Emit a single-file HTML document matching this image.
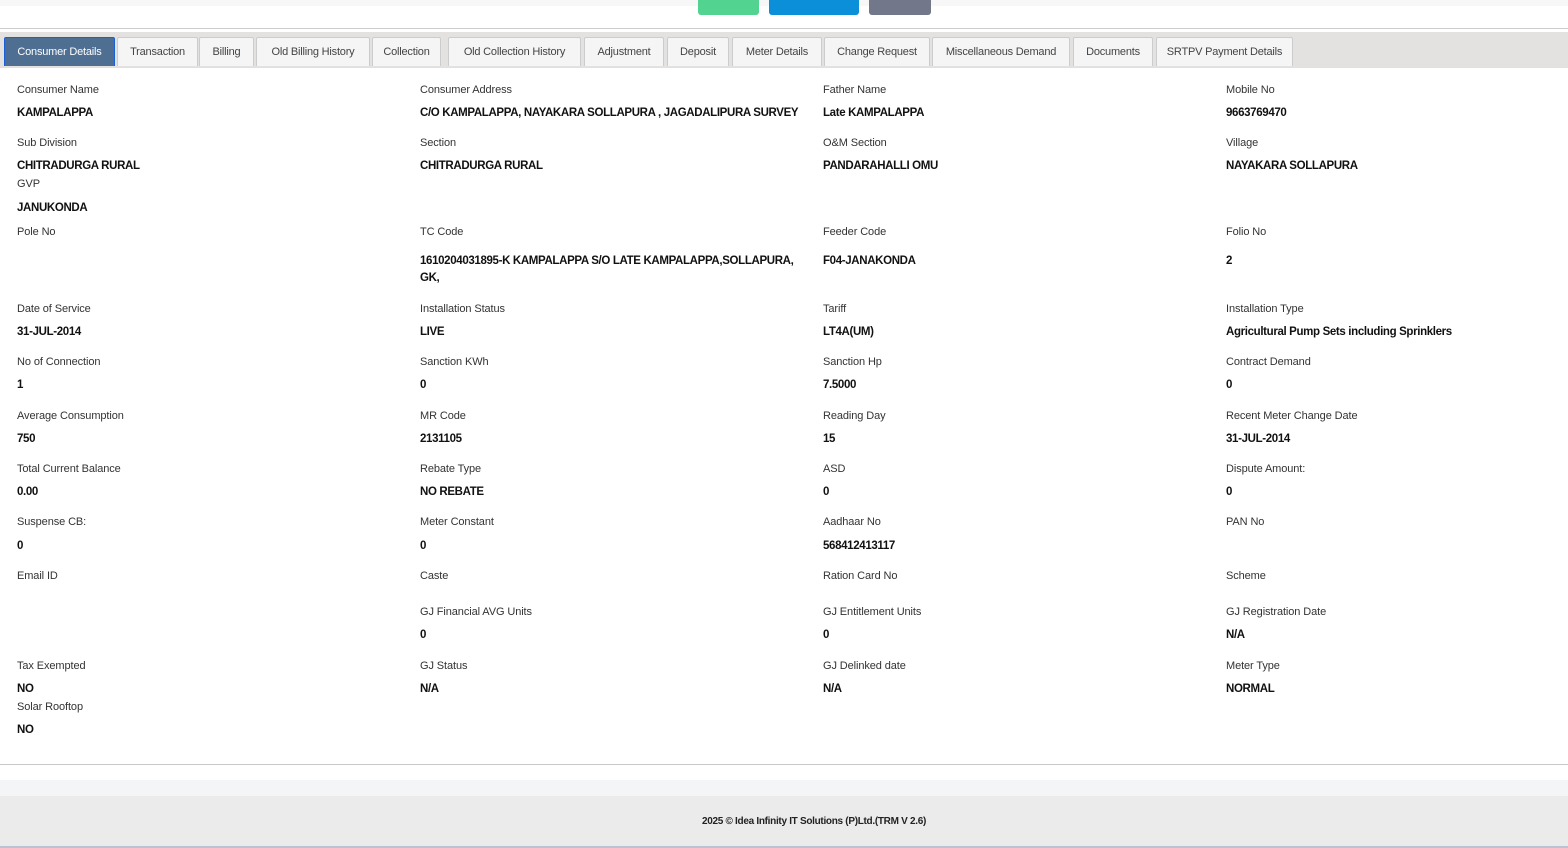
<!DOCTYPE html><html><head><style>
body{margin:0;width:1568px;height:848px;position:relative;background:#fff;font-family:"Liberation Sans",sans-serif;overflow:hidden;color:#222}
#w{position:absolute;left:0;top:1px;width:1568px;height:800px}
.a{position:absolute;white-space:nowrap;line-height:14px}
.l{font-size:11px;color:#333;letter-spacing:-0.1px}
.v{font-size:11.5px;font-weight:bold;color:#111;letter-spacing:-0.35px}
.tab{position:absolute;top:37px;height:29px;border:1px solid #ccc;border-bottom:none;background:#f5f5f5;font-size:11px;color:#444;text-align:center;line-height:29px;box-sizing:border-box;border-radius:2px 2px 0 0;letter-spacing:-0.2px}
</style></head><body>
<div style="position:absolute;left:0;top:0;width:1568px;height:6px;background:#f7f7f7"></div>
<div style="position:absolute;left:698px;top:0;width:61px;height:15px;background:#52d38f;border-radius:0 0 3px 3px"></div>
<div style="position:absolute;left:769px;top:0;width:90px;height:15px;background:#0a8fd8;border-radius:0 0 3px 3px"></div>
<div style="position:absolute;left:869px;top:0;width:62px;height:15px;background:#727789;border-radius:0 0 3px 3px"></div>
<div style="position:absolute;left:0;top:28px;width:1568px;height:1px;background:#ccc"></div>
<div style="position:absolute;left:0;top:32px;width:1568px;height:36px;background:#e4e2e0"></div>
<div class="tab" style="left:4px;width:111px;background:#4e6e92;color:#fff;border-color:#1a5fd8">Consumer Details</div>
<div class="tab" style="left:117px;width:81px">Transaction</div>
<div class="tab" style="left:199px;width:55px">Billing</div>
<div class="tab" style="left:256px;width:114px">Old Billing History</div>
<div class="tab" style="left:372px;width:69px">Collection</div>
<div class="tab" style="left:448px;width:133px">Old Collection History</div>
<div class="tab" style="left:584px;width:80px">Adjustment</div>
<div class="tab" style="left:667px;width:62px">Deposit</div>
<div class="tab" style="left:732px;width:90px">Meter Details</div>
<div class="tab" style="left:824px;width:106px">Change Request</div>
<div class="tab" style="left:932px;width:138px">Miscellaneous Demand</div>
<div class="tab" style="left:1073px;width:80px">Documents</div>
<div class="tab" style="left:1156px;width:137px">SRTPV Payment Details</div>
<div style="position:absolute;left:0;top:67px;width:1568px;height:1px;background:#e0e0e0"></div>
<div id="w">
<div class="a l" style="left:17px;top:82px">Consumer Name</div><div class="a v" style="left:17px;top:105px">KAMPALAPPA</div>
<div class="a l" style="left:420px;top:82px">Consumer Address</div><div class="a v" style="left:420px;top:105px">C/O KAMPALAPPA, NAYAKARA SOLLAPURA , JAGADALIPURA SURVEY</div>
<div class="a l" style="left:823px;top:82px">Father Name</div><div class="a v" style="left:823px;top:105px">Late KAMPALAPPA</div>
<div class="a l" style="left:1226px;top:82px">Mobile No</div><div class="a v" style="left:1226px;top:105px">9663769470</div>

<div class="a l" style="left:17px;top:135px">Sub Division</div><div class="a v" style="left:17px;top:158px">CHITRADURGA RURAL</div>
<div class="a l" style="left:420px;top:135px">Section</div><div class="a v" style="left:420px;top:158px">CHITRADURGA RURAL</div>
<div class="a l" style="left:823px;top:135px">O&amp;M Section</div><div class="a v" style="left:823px;top:158px">PANDARAHALLI OMU</div>
<div class="a l" style="left:1226px;top:135px">Village</div><div class="a v" style="left:1226px;top:158px">NAYAKARA SOLLAPURA</div>
<div class="a l" style="left:17px;top:176px">GVP</div><div class="a v" style="left:17px;top:200px">JANUKONDA</div>

<div class="a l" style="left:17px;top:224px">Pole No</div>
<div class="a l" style="left:420px;top:224px">TC Code</div><div class="a v" style="left:420px;top:252px;line-height:17px">1610204031895-K KAMPALAPPA S/O LATE KAMPALAPPA,SOLLAPURA,<br>GK,</div>
<div class="a l" style="left:823px;top:224px">Feeder Code</div><div class="a v" style="left:823px;top:253px">F04-JANAKONDA</div>
<div class="a l" style="left:1226px;top:224px">Folio No</div><div class="a v" style="left:1226px;top:253px">2</div>

<div class="a l" style="left:17px;top:301px">Date of Service</div><div class="a v" style="left:17px;top:324px">31-JUL-2014</div>
<div class="a l" style="left:420px;top:301px">Installation Status</div><div class="a v" style="left:420px;top:324px">LIVE</div>
<div class="a l" style="left:823px;top:301px">Tariff</div><div class="a v" style="left:823px;top:324px">LT4A(UM)</div>
<div class="a l" style="left:1226px;top:301px">Installation Type</div><div class="a v" style="left:1226px;top:324px">Agricultural Pump Sets including Sprinklers</div>

<div class="a l" style="left:17px;top:354px">No of Connection</div><div class="a v" style="left:17px;top:377px">1</div>
<div class="a l" style="left:420px;top:354px">Sanction KWh</div><div class="a v" style="left:420px;top:377px">0</div>
<div class="a l" style="left:823px;top:354px">Sanction Hp</div><div class="a v" style="left:823px;top:377px">7.5000</div>
<div class="a l" style="left:1226px;top:354px">Contract Demand</div><div class="a v" style="left:1226px;top:377px">0</div>

<div class="a l" style="left:17px;top:408px">Average Consumption</div><div class="a v" style="left:17px;top:431px">750</div>
<div class="a l" style="left:420px;top:408px">MR Code</div><div class="a v" style="left:420px;top:431px">2131105</div>
<div class="a l" style="left:823px;top:408px">Reading Day</div><div class="a v" style="left:823px;top:431px">15</div>
<div class="a l" style="left:1226px;top:408px">Recent Meter Change Date</div><div class="a v" style="left:1226px;top:431px">31-JUL-2014</div>

<div class="a l" style="left:17px;top:461px">Total Current Balance</div><div class="a v" style="left:17px;top:484px">0.00</div>
<div class="a l" style="left:420px;top:461px">Rebate Type</div><div class="a v" style="left:420px;top:484px">NO REBATE</div>
<div class="a l" style="left:823px;top:461px">ASD</div><div class="a v" style="left:823px;top:484px">0</div>
<div class="a l" style="left:1226px;top:461px">Dispute Amount:</div><div class="a v" style="left:1226px;top:484px">0</div>

<div class="a l" style="left:17px;top:514px">Suspense CB:</div><div class="a v" style="left:17px;top:538px">0</div>
<div class="a l" style="left:420px;top:514px">Meter Constant</div><div class="a v" style="left:420px;top:538px">0</div>
<div class="a l" style="left:823px;top:514px">Aadhaar No</div><div class="a v" style="left:823px;top:538px">568412413117</div>
<div class="a l" style="left:1226px;top:514px">PAN No</div>

<div class="a l" style="left:17px;top:568px">Email ID</div>
<div class="a l" style="left:420px;top:568px">Caste</div>
<div class="a l" style="left:823px;top:568px">Ration Card No</div>
<div class="a l" style="left:1226px;top:568px">Scheme</div>

<div class="a l" style="left:420px;top:604px">GJ Financial AVG Units</div><div class="a v" style="left:420px;top:627px">0</div>
<div class="a l" style="left:823px;top:604px">GJ Entitlement Units</div><div class="a v" style="left:823px;top:627px">0</div>
<div class="a l" style="left:1226px;top:604px">GJ Registration Date</div><div class="a v" style="left:1226px;top:627px">N/A</div>

<div class="a l" style="left:17px;top:658px">Tax Exempted</div><div class="a v" style="left:17px;top:681px">NO</div>
<div class="a l" style="left:420px;top:658px">GJ Status</div><div class="a v" style="left:420px;top:681px">N/A</div>
<div class="a l" style="left:823px;top:658px">GJ Delinked date</div><div class="a v" style="left:823px;top:681px">N/A</div>
<div class="a l" style="left:1226px;top:658px">Meter Type</div><div class="a v" style="left:1226px;top:681px">NORMAL</div>
<div class="a l" style="left:17px;top:699px">Solar Rooftop</div><div class="a v" style="left:17px;top:722px">NO</div>
</div>
<div style="position:absolute;left:0;top:764px;width:1568px;height:1px;background:#c8c8c8"></div>
<div style="position:absolute;left:0;top:780px;width:1568px;height:16px;background:#f4f5f6"></div>
<div style="position:absolute;left:0;top:796px;width:1568px;height:50px;background:#ebebeb;border-bottom:2px solid #b8c4d4"></div>
<div class="a" style="left:0;width:1628px;text-align:center;top:815px;font-size:10px;font-weight:bold;color:#222;letter-spacing:-0.3px">2025 © Idea Infinity IT Solutions (P)Ltd.(TRM V 2.6)</div>
</body></html>
